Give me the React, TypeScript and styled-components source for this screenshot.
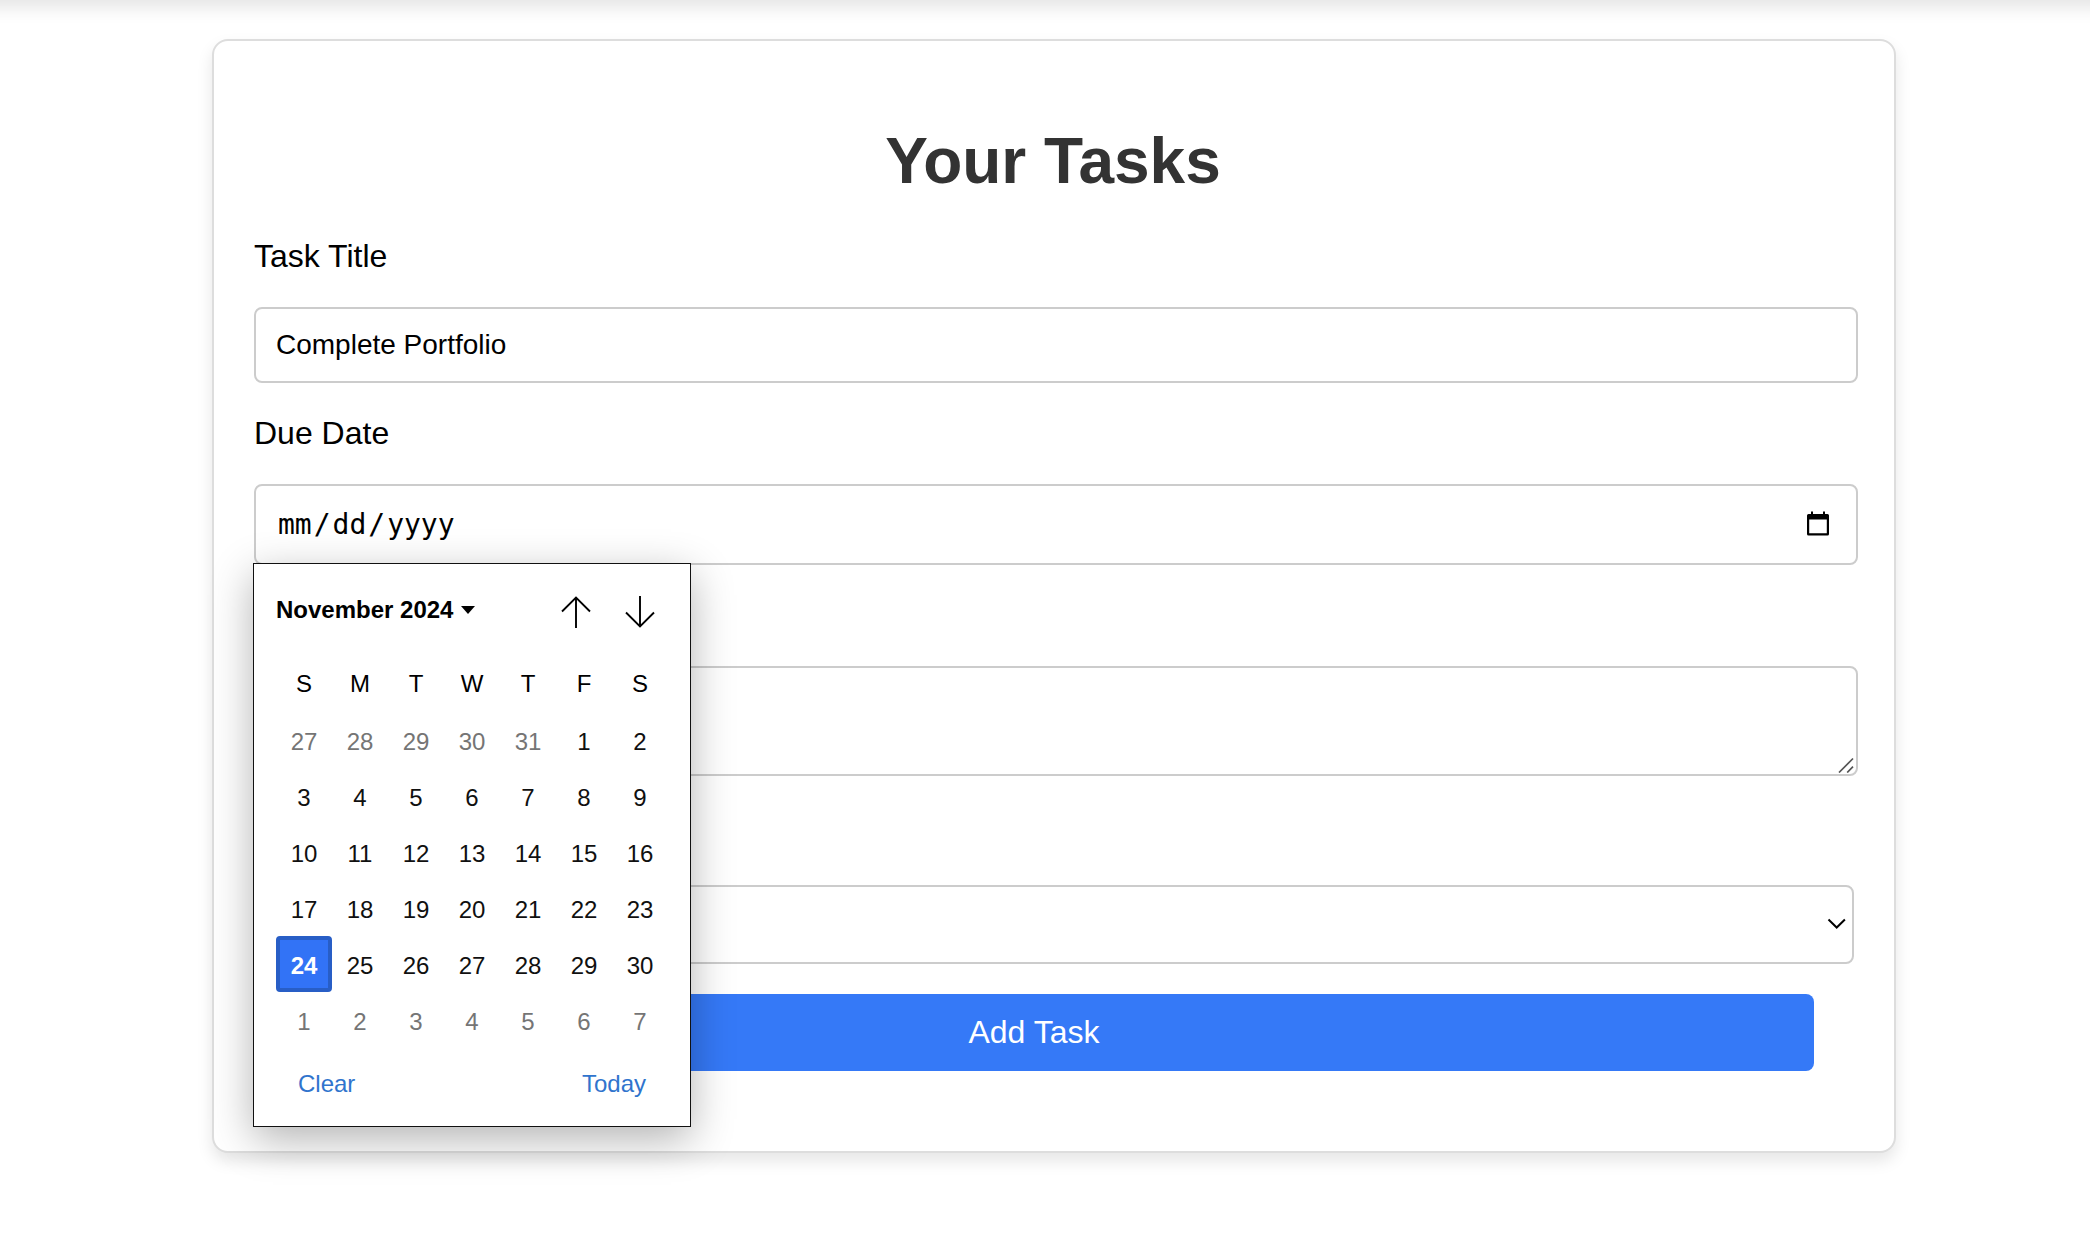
import React from "react";
import styled, { createGlobalStyle, css } from "styled-components";

const GlobalStyle = createGlobalStyle`
  *, *::before, *::after { box-sizing: border-box; }
  html, body { margin: 0; padding: 0; background: #fff; overflow: hidden; }
  body { font-family: "Liberation Sans", Arial, Helvetica, sans-serif; color: #000; }
`;

const Page = styled.div`
  display: flex;
  flex-direction: column;
  width: 2090px;
  height: 1260px;
  background: #fff;
`;

const TopBar = styled.header`
  flex: none;
  height: 60px;
  margin: -60px -40px 0;
  background: #fff;
  box-shadow: 0 8px 16px rgba(0, 0, 0, 0.1);
`;

const Card = styled.main`
  display: flex;
  flex-direction: column;
  flex: none;
  width: 1684px;
  height: 1114px;
  margin: 39px 0 0 212px;
  padding: 83px 40px 0;
  border: 2px solid #ddd;
  border-radius: 16px;
  background: #fff;
  box-shadow: 0 8px 16px rgba(0, 0, 0, 0.1);
`;

const Title = styled.h1`
  margin: 0 2px 40px 0;
  font-size: 64px;
  line-height: 74px;
  font-weight: 700;
  text-align: center;
  color: #333;
`;

const Field = styled.div<{ $gap?: number }>`
  display: flex;
  flex-direction: column;
  gap: 33px;
  margin-top: ${(p) => p.$gap ?? 0}px;
`;

const Label = styled.div`
  height: 36px;
  font-size: 32px;
  line-height: 36px;
`;

const Control = styled.div<{ $height: number; $width?: number }>`
  position: relative;
  display: flex;
  align-items: center;
  justify-content: space-between;
  width: ${(p) => p.$width ?? 1604}px;
  height: ${(p) => p.$height}px;
  border: 2px solid #ccc;
  border-radius: 8px;
  background: #fff;
  font-size: 28px;
  line-height: 32px;
`;

const TextValue = styled.span`
  padding-left: 20px;
`;

const DateValue = styled.span`
  display: flex;
  gap: 2px;
  padding: 1px 0 0 22px;
  font-family: "DejaVu Sans Mono", "Liberation Mono", monospace;
`;

const DateIcon = styled.svg`
  flex: none;
  margin: -3px 27px 0 0;
`;

const ResizeGrip = styled.svg`
  align-self: flex-end;
  margin: 0 2px 1px auto;
`;

const Chevron = styled.svg`
  margin: -1px 6px 0 auto;
`;

const SubmitButton = styled.button`
  width: 1560px;
  height: 77px;
  margin: 30px 0 0;
  padding: 0 0 1px;
  border: 0;
  border-radius: 8px;
  background: #3579f7;
  color: #fff;
  font-family: inherit;
  font-size: 32px;
  line-height: 36px;
`;

const Popup = styled.div`
  position: absolute;
  z-index: 10;
  top: 77px;
  left: -3px;
  display: flex;
  flex-direction: column;
  width: 438px;
  height: 564px;
  padding: 0 22px;
  border: 1px solid #111;
  background: #fff;
  box-shadow: 0 12px 40px rgba(0, 0, 0, 0.3);
  font-size: 24px;
  line-height: 28px;
`;

const PopupHeader = styled.div`
  display: flex;
  align-items: center;
  height: 92px;
`;

const MonthLabel = styled.div`
  display: flex;
  align-items: center;
  gap: 7px;
  flex: 1;
  font-weight: 700;
`;

const Arrows = styled.div`
  display: flex;
  gap: 34px;
  margin: 4px 13px 0 0;
`;

const Grid = styled.div`
  display: grid;
  grid-template-columns: repeat(7, 56px);
`;

const Weekday = styled.div`
  height: 56px;
  line-height: 56px;
  text-align: center;
`;

const Day = styled.div<{ $muted?: boolean; $selected?: boolean }>`
  height: 56px;
  padding-top: 2px;
  line-height: 56px;
  text-align: center;
  color: ${(p) => (p.$muted ? "#757575" : "#101010")};
  ${(p) =>
    p.$selected &&
    css`
      padding-top: 0;
      line-height: 52px;
      border: 4px solid #285ec6;
      border-radius: 4px;
      background: #3273f6;
      color: #fff;
      font-weight: 700;
    `}
`;

const PopupFooter = styled.div`
  display: flex;
  justify-content: space-between;
  padding: 22px 22px 0;
  color: #3074cd;
`;

const weekdays = ["S", "M", "T", "W", "T", "F", "S"];
const days = Array.from({ length: 42 }, (_, i) => {
  if (i < 5) return { n: 27 + i, muted: true };
  if (i < 35) return { n: i - 4, muted: false };
  return { n: i - 34, muted: true };
});

function Calendar() {
  return (
    <Popup>
      <PopupHeader>
        <MonthLabel>
          <span>November 2024</span>
          <svg width="16" height="8" viewBox="0 0 16 8">
            <path d="M1 0H15L8 8Z" />
          </svg>
        </MonthLabel>
        <Arrows>
          <svg width="30" height="32" viewBox="0 0 30 32" fill="none" stroke="#000" strokeWidth="1.9">
            <path d="M15 32V1.5M1 15.5L15 1.5L29 15.5" />
          </svg>
          <svg width="30" height="32" viewBox="0 0 30 32" fill="none" stroke="#000" strokeWidth="1.9">
            <path d="M15 0V30.5M1 16.5L15 30.5L29 16.5" />
          </svg>
        </Arrows>
      </PopupHeader>
      <Grid>
        {weekdays.map((d, i) => (
          <Weekday key={i}>{d}</Weekday>
        ))}
        {days.map((d, i) => (
          <Day key={i} $muted={d.muted} $selected={!d.muted && d.n === 24}>
            {d.n}
          </Day>
        ))}
      </Grid>
      <PopupFooter>
        <span>Clear</span>
        <span>Today</span>
      </PopupFooter>
    </Popup>
  );
}

export default function App() {
  return (
    <>
      <GlobalStyle />
      <Page>
        <TopBar />
        <Card>
          <Title>Your Tasks</Title>
          <Field>
            <Label>Task Title</Label>
            <Control $height={76}>
              <TextValue>Complete Portfolio</TextValue>
            </Control>
          </Field>
          <Field $gap={32}>
            <Label>Due Date</Label>
            <Control $height={81}>
              <DateValue>
                <span>mm</span>
                <span>/</span>
                <span>dd</span>
                <span>/</span>
                <span>yyyy</span>
              </DateValue>
              <DateIcon width="22" height="25" viewBox="0 0 22 25">
                <path
                  fillRule="evenodd"
                  d="M4 0.5H6V3H16V0.5H18V3H20.5Q22 3 22 4.5V23Q22 24.5 20.5 24.5H1.5Q0 24.5 0 23V4.5Q0 3 1.5 3H4ZM2.2 8.5V22.3H19.8V8.5Z"
                />
              </DateIcon>
              <Calendar />
            </Control>
          </Field>
          <Field $gap={32}>
            <Label />
            <Control $height={110}>
              <ResizeGrip width="16" height="16" viewBox="0 0 16 16" stroke="#555" strokeWidth="1.7">
                <path d="M1 15.5L15 1.5M9.2 15.5L15 9.7" />
              </ResizeGrip>
            </Control>
          </Field>
          <Field $gap={40}>
            <Label />
            <Control $height={79} $width={1600}>
              <Chevron width="19" height="12" viewBox="0 0 19 12" fill="none" stroke="#000" strokeWidth="2">
                <path d="M1.5 1.5L9.7 9.5L17.9 1.5" />
              </Chevron>
            </Control>
          </Field>
          <SubmitButton>Add Task</SubmitButton>
        </Card>
      </Page>
    </>
  );
}
